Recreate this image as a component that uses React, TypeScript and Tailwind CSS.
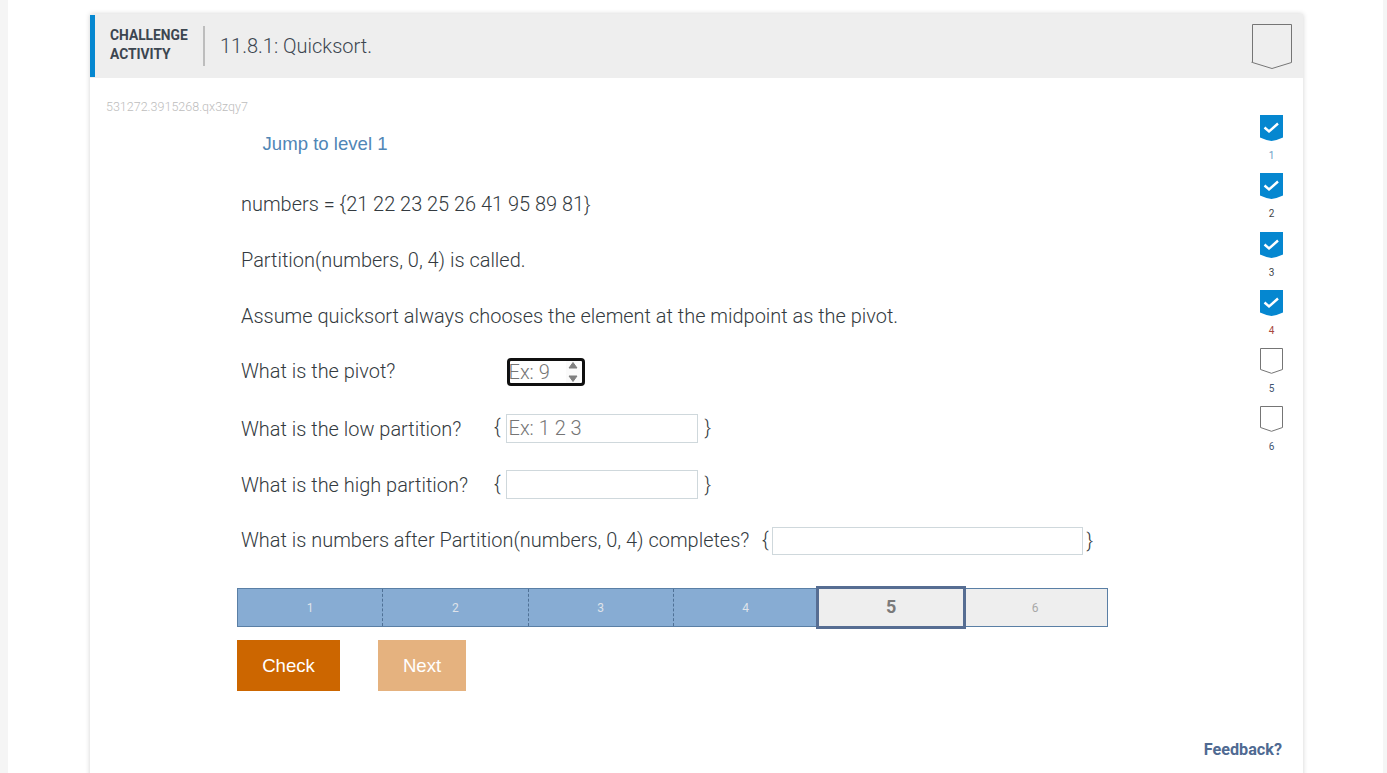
import React from "react";

const Shield = ({ filled, big }: { filled?: boolean; big?: boolean }) => {
  if (big) {
    return (
      <svg width="42" height="46" viewBox="0 0 42 46" className="block">
        <path d="M0.500 39.300l1 0.200V1.500h39v38L21 45.500L1.500 39.500" fill="none" stroke="#757575" strokeWidth="1" />
      </svg>
    );
  }
  if (filled) {
    return (
      <svg width="23" height="26" viewBox="0 0 23 26" className="block">
        <path d="M0 0h23v22.500q-6 2.800-11.500 3.500q-5.500-0.700-11.500-3.500z" fill="#0587d0" />
        <path d="M4.500 12.500L9 16.500L18 8.500" fill="none" stroke="#fff" strokeWidth="2.400" />
      </svg>
    );
  }
  return (
    <svg width="23" height="26" viewBox="0 0 23 26" className="block">
      <path d="M0.500 0.500h22v21l-11 3.800l-11-3.800z" fill="#fff" stroke="#757575" strokeWidth="1" />
    </svg>
  );
};

const levels = [
  { n: 1, filled: true, color: "text-[#6a9cc6]" },
  { n: 2, filled: true, color: "text-[#3f4448]" },
  { n: 3, filled: true, color: "text-[#3f4448]" },
  { n: 4, filled: true, color: "text-[#a8483c]" },
  { n: 5, filled: false, color: "text-[#3f5470]" },
  { n: 6, filled: false, color: "text-[#3f5470]" },
];

const Row = ({ children }: { children: React.ReactNode }) => (
  <div className="flex items-center h-[56px] whitespace-nowrap">{children}</div>
);

const boxCls =
  "border border-[#cfd8dc] bg-white text-[20px] font-light text-[#757575] pl-[2px] leading-[27px]";

export default function App() {
  return (
    <div
      className="h-[773px] w-[1387px] overflow-hidden bg-[#f5f5f5] flex pl-[8px] pr-[4px] text-[#333a40] font-light"
      style={{ fontFamily: "Roboto, 'Liberation Sans', sans-serif" }}
    >
      <div className="bg-white flex-1 min-w-0 pl-[82px] pr-[80px] pt-[14px]">
        <div className="bg-white h-[800px] shadow-[0_0_5px_rgba(0,0,0,0.18)]">
          <header className="h-[64px] bg-[#eeeeee] flex items-center">
            <div className="w-[5px] h-[62px] bg-[#0587d0]" />
            <div className="ml-[15px] mb-[2px] w-[93px] text-[13.8px] leading-[19px] font-bold text-[#3c4650]">
              CHALLENGE
              <br />
              ACTIVITY
            </div>
            <div className="w-[2px] h-[40px] bg-[#bdbdbd]" />
            <div className="ml-[15px] text-[20px] font-light text-[#3c4650]">11.8.1: Quicksort.</div>
            <div className="ml-auto mr-[10px]">
              <Shield big />
            </div>
          </header>

          <div className="flex">
            <div className="w-[1170px] shrink-0">
              <div className="pl-[16px] pt-[20px] h-[20px] box-content text-[12.5px] leading-[18px] text-[#bdbdbd]">
                531272.3915268.qx3zqy7
              </div>
              <div
                className="pl-[172.5px] mt-[10px] h-[38px] text-[18.6px] leading-[32px] font-normal text-[#5086b6]"
                style={{ fontFamily: "'Liberation Sans', sans-serif" }}
              >
                Jump to level 1
              </div>

              <div className="pl-[151px] text-[19.95px] mt-[10px]">
                <Row><span className="mt-[2px]">numbers = {"{"}21 22 23 25 26 41 95 89 81{"}"}</span></Row>
                <Row><span className="mt-[2px]">Partition(numbers, 0, 4) is called.</span></Row>
                <Row><span className="mt-[2px]">Assume quicksort always chooses the element at the midpoint as the pivot.</span></Row>
                <Row>
                  <span className="w-[265.5px]">What is the pivot?</span>
                  <div className="w-[78px] h-[28px] border-[3px] border-[#101010] rounded-[4px] flex items-center justify-between bg-white pr-[2px] text-[20px] text-[#757575]">
                    <span className="leading-none -ml-[1px]">Ex: 9</span>
                    <svg width="14" height="22" viewBox="0 0 14 22" className="block bg-[#fafafa]">
                      <path d="M7 1.500l4 5.500h-8z M7 20.500l4-5.500h-8z" fill="#7f7f7f" stroke="#7f7f7f" strokeLinejoin="round" />
                    </svg>
                  </div>
                </Row>
                <Row>
                  <span className="w-[253px] mt-[4px]">What is the low partition?</span>
                  <span className="w-[11.5px] font-light">{"{"}</span>
                  <div className={`${boxCls} h-[29px] w-[192px]`}>Ex: 1 2 3</div>
                  <span className="ml-[7px]">{"}"}</span>
                </Row>
                <Row>
                  <span className="w-[253px] mt-[4px]">What is the high partition?</span>
                  <span className="w-[11.5px] mt-[2px]">{"{"}</span>
                  <div className={`${boxCls} h-[29px] w-[192px]`} />
                  <span className="ml-[7px] mt-[2px]">{"}"}</span>
                </Row>
                <Row>
                  <span className="w-[521px] mt-[2px]">What is numbers after Partition(numbers, 0, 4) completes?</span>
                  <span className="w-[9.5px] mt-[2px]">{"{"}</span>
                  <div className={`${boxCls} h-[28px] mt-[1px] w-[311px]`} />
                  <span className="ml-[4px] mt-[2px]">{"}"}</span>
                </Row>
              </div>

              <div className="ml-[147px] mt-[20px] w-[871px] h-[39px] flex border border-[#5a7fa5] text-[12px] font-normal">
                {[1, 2, 3, 4].map((n) => (
                  <div
                    key={n}
                    className={`${n < 4 ? "w-[145.25px] border-r border-dashed border-[#4f7196]" : "w-[142.5px] pl-[1px]"} flex items-center justify-center bg-[#87acd3] text-[#dfe3ea]`}
                  >
                    {n}
                  </div>
                ))}
                <div className="w-[150px] h-[43px] -my-[3px] z-10 -mr-[1px] pb-[2px] flex items-center justify-center bg-[#eeeeee] border-[3px] border-[#566d92] text-[18px] font-bold text-[#7a7a7a]">
                  5
                </div>
                <div className="flex-1 pr-[2px] flex items-center justify-center bg-[#eeeeee] text-[#a8a8a8]">6</div>
              </div>

              <div
                className="ml-[147px] mt-[13px] flex gap-[38px] text-[18.6px] font-normal text-white"
                style={{ fontFamily: "'Liberation Sans', sans-serif" }}
              >
                <div className="w-[103px] h-[51px] bg-[#cc6600] flex items-center justify-center">Check</div>
                <div className="w-[88px] h-[51px] bg-[#e5b27f] flex items-center justify-center">Next</div>
              </div>
            </div>

            <div className="w-[43px] shrink-0 flex flex-col items-center pt-[37px] pr-[20px]">
              {levels.map((l) => (
                <div key={l.n} className="h-[58.3px] flex flex-col items-center">
                  <Shield filled={l.filled} />
                  <div className={`text-[10px] font-normal leading-[12px] mt-[9px] ${l.color}`}>{l.n}</div>
                </div>
              ))}
              <div className="mt-[275px] mr-[1px] self-end text-[16.2px] font-bold text-[#4f6a92] leading-[20px] whitespace-nowrap">
                Feedback?
              </div>
            </div>
          </div>
        </div>
      </div>
    </div>
  );
}
